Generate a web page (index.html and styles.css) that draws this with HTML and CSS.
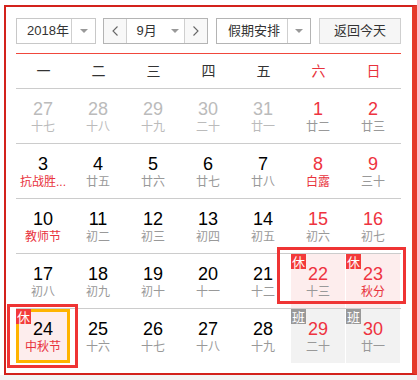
FILE: index.html
```html
<!DOCTYPE html>
<html lang="zh-CN">
<head>
<meta charset="utf-8">
<title>万年历</title>
<link rel="stylesheet" href="styles.css">
</head>
<body>
<div class="page">
  <div class="cal">
    <div class="toolbar">
      <div class="sel sel-year">
        <span class="sel-text">2018年</span>
        <span class="sel-arrow"><i class="tri"></i></span>
      </div>
      <div class="month-group">
        <span class="nav"><svg width="6" height="10" viewBox="0 0 6 10"><polyline points="5.5,0.5 1,5 5.5,9.5" fill="none" stroke="#666" stroke-width="1.1"/></svg></span>
        <span class="month"><span class="month-text">9月</span><i class="tri"></i></span>
        <span class="nav"><svg width="6" height="10" viewBox="0 0 6 10"><polyline points="0.5,0.5 5,5 0.5,9.5" fill="none" stroke="#666" stroke-width="1.1"/></svg></span>
      </div>
      <div class="sel sel-holiday">
        <span class="sel-text">假期安排</span>
        <span class="sel-arrow"><i class="tri"></i></span>
      </div>
      <span class="today-btn">返回今天</span>
    </div>

    <div class="weekdays">
      <span>一</span><span>二</span><span>三</span><span>四</span><span>五</span><span class="wk-red">六</span><span class="wk-red">日</span>
    </div>

    <div class="row">
      <div class="cell other"><div class="num">27</div><div class="lunar">十七</div></div>
      <div class="cell other"><div class="num">28</div><div class="lunar">十八</div></div>
      <div class="cell other"><div class="num">29</div><div class="lunar">十九</div></div>
      <div class="cell other"><div class="num">30</div><div class="lunar">二十</div></div>
      <div class="cell other"><div class="num">31</div><div class="lunar">廿一</div></div>
      <div class="cell weekend"><div class="num">1</div><div class="lunar">廿二</div></div>
      <div class="cell weekend"><div class="num">2</div><div class="lunar">廿三</div></div>
    </div>
    <div class="row">
      <div class="cell"><div class="num">3</div><div class="lunar fest">抗战胜...</div></div>
      <div class="cell"><div class="num">4</div><div class="lunar">廿五</div></div>
      <div class="cell"><div class="num">5</div><div class="lunar">廿六</div></div>
      <div class="cell"><div class="num">6</div><div class="lunar">廿七</div></div>
      <div class="cell"><div class="num">7</div><div class="lunar">廿八</div></div>
      <div class="cell weekend"><div class="num">8</div><div class="lunar fest">白露</div></div>
      <div class="cell weekend"><div class="num">9</div><div class="lunar">三十</div></div>
    </div>
    <div class="row">
      <div class="cell"><div class="num">10</div><div class="lunar fest">教师节</div></div>
      <div class="cell"><div class="num">11</div><div class="lunar">初二</div></div>
      <div class="cell"><div class="num">12</div><div class="lunar">初三</div></div>
      <div class="cell"><div class="num">13</div><div class="lunar">初四</div></div>
      <div class="cell"><div class="num">14</div><div class="lunar">初五</div></div>
      <div class="cell weekend"><div class="num">15</div><div class="lunar">初六</div></div>
      <div class="cell weekend"><div class="num">16</div><div class="lunar">初七</div></div>
    </div>
    <div class="row">
      <div class="cell"><div class="num">17</div><div class="lunar">初八</div></div>
      <div class="cell"><div class="num">18</div><div class="lunar">初九</div></div>
      <div class="cell"><div class="num">19</div><div class="lunar">初十</div></div>
      <div class="cell"><div class="num">20</div><div class="lunar">十一</div></div>
      <div class="cell"><div class="num">21</div><div class="lunar">十二</div></div>
      <div class="cell weekend rest"><span class="badge badge-rest">休</span><div class="num">22</div><div class="lunar">十三</div></div>
      <div class="cell weekend rest"><span class="badge badge-rest">休</span><div class="num">23</div><div class="lunar fest">秋分</div></div>
    </div>
    <div class="row">
      <div class="cell rest today"><span class="badge badge-rest">休</span><div class="num">24</div><div class="lunar fest">中秋节</div></div>
      <div class="cell"><div class="num">25</div><div class="lunar">十六</div></div>
      <div class="cell"><div class="num">26</div><div class="lunar">十七</div></div>
      <div class="cell"><div class="num">27</div><div class="lunar">十八</div></div>
      <div class="cell"><div class="num">28</div><div class="lunar">十九</div></div>
      <div class="cell weekend work"><span class="badge badge-work">班</span><div class="num">29</div><div class="lunar">二十</div></div>
      <div class="cell weekend work"><span class="badge badge-work">班</span><div class="num">30</div><div class="lunar">廿一</div></div>
    </div>

    <div class="mark mark-rest"></div>
    <div class="mark mark-today"></div>
  </div>
  <div class="strip"></div>
</div>
</body>
</html>
```

FILE: styles.css
```css
* { box-sizing: border-box; }

html, body {
  margin: 0;
  padding: 0;
  background: #fff;
}

body {
  font-family: "Liberation Sans", Arial, "Noto Sans CJK SC", sans-serif;
  color: #333;
}

.page {
  padding: 5px 0 0 4px;
  width: 417px;
}

.cal {
  position: relative;
  width: 413px;
  border: 2px solid #d3221c;
  border-right: 5px solid #e5392a;
  padding: 11px 11px 10px 10px;
  background: #fff;
}

/* toolbar */
.toolbar {
  display: flex;
  height: 26px;
  font-size: 13px;
  color: #333;
}

.sel {
  display: flex;
  height: 26px;
  border: 1px solid #c8c8c8;
  background: #fff;
}

.sel-year { width: 80px; }
.sel-holiday { width: 95px; margin-left: 8px; border-color: #b4b4b4; }

.sel-text {
  flex: 1;
  line-height: 24px;
  padding-left: 10px;
  white-space: nowrap;
}

.sel-holiday .sel-text { padding-left: 11px; }

.sel-arrow {
  width: 24px;
  border-left: 1px solid #cfcfcf;
  display: flex;
  align-items: center;
  justify-content: center;
}

.sel-holiday .sel-arrow { width: 23px; }

.tri {
  display: block;
  width: 0;
  height: 0;
  border-left: 4px solid transparent;
  border-right: 4px solid transparent;
  border-top: 4px solid #999;
}

.month-group {
  display: flex;
  margin-left: 7px;
  width: 105px;
  height: 26px;
  border: 1px solid #b4b4b4;
}

.nav {
  width: 22px;
  display: flex;
  align-items: center;
  justify-content: center;
  background: #f8f8f8;
}

.month {
  width: 61px;
  display: flex;
  align-items: center;
  border-left: 1px solid #cfcfcf;
  border-right: 1px solid #cfcfcf;
  padding-left: 10px;
}

.month-text {
  line-height: 24px;
  width: 34px;
}

.today-btn {
  margin-left: auto;
  width: 82px;
  height: 26px;
  border: 1px solid #cfcfcf;
  background: #f6f6f6;
  text-align: center;
  line-height: 24px;
  color: #333;
}

/* weekdays */
.weekdays {
  margin-top: 9px;
  border-top: 1px solid #f0483c;
  display: grid;
  grid-template-columns: repeat(7, 55px);
  height: 35px;
  font-size: 14px;
  line-height: 34px;
  text-align: center;
  color: #333;
}

.wk-red { color: #e8323c; }

/* day rows */
.row {
  display: grid;
  grid-template-columns: repeat(7, 54px);
  column-gap: 1px;
  border-top: 1px solid #ccc;
  width: 385px;
}

.cell {
  position: relative;
  height: 54px;
  padding-top: 10px;
  text-align: center;
}

.num {
  font-size: 18px;
  line-height: 20px;
  color: #000;
}

.lunar {
  font-size: 12px;
  line-height: 16px;
  color: #999;
  white-space: nowrap;
}

.fest { color: #e8323c; }

.other .num,
.other .lunar { color: #bbb; }

.weekend .num { color: #ee3340; }

.rest { background: #fdeded; }
.work { background: #f2f2f2; }

.today {
  border: 3px solid #ffb400;
  padding-top: 7px;
}

.badge {
  position: absolute;
  top: 0;
  left: 0;
  width: 15px;
  height: 15px;
  font-size: 13px;
  line-height: 15px;
  text-align: center;
  color: #fff;
  font-family: "Noto Sans CJK SC", sans-serif;
}

.today .badge { top: -3px; left: -3px; }

.badge-rest { background: #f33a3a; }
.badge-work { background: #999; }

/* annotation overlays */
.mark {
  position: absolute;
  border: 3px solid #ef3434;
  pointer-events: none;
}

.mark-rest {
  left: 271px;
  top: 240px;
  width: 129px;
  height: 57px;
}

.mark-today {
  left: 1px;
  top: 297px;
  width: 71px;
  height: 64px;
}

.strip {
  height: 6px;
  margin-left: -4px;
  background: #f3f3f3;
}
```
